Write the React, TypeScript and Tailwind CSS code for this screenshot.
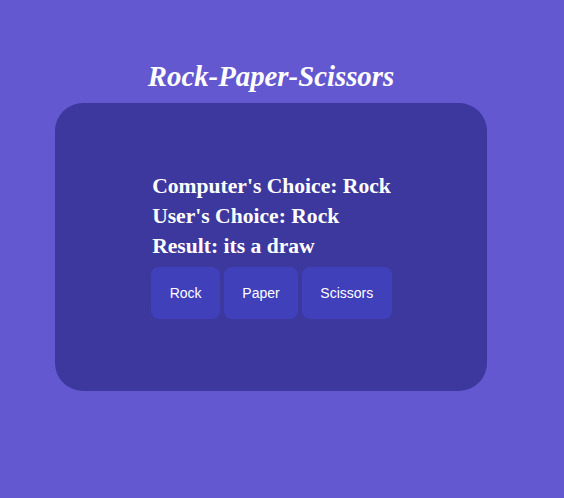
import React, { useState } from 'react';

type Choice = 'Rock' | 'Paper' | 'Scissors';

const choices: Choice[] = ['Rock', 'Paper', 'Scissors'];

const getResult = (user: Choice, computer: Choice) => {
  if (user === computer) return 'its a draw';
  if (
    (user === 'Rock' && computer === 'Scissors') ||
    (user === 'Paper' && computer === 'Rock') ||
    (user === 'Scissors' && computer === 'Paper')
  )
    return 'you win';
  return 'you lose';
};

export default function App() {
  const [user, setUser] = useState<Choice>('Rock');
  const [computer, setComputer] = useState<Choice>('Rock');

  const play = (c: Choice) => {
    setUser(c);
    setComputer(choices[Math.floor(Math.random() * 3)]);
  };

  return (
    <div className="min-h-[498px] w-full bg-[#6358cf] pt-[60px] [font-family:'Liberation_Serif',serif]">
      <div className="ml-[55px] w-[432px]">
        <h1 className="text-center text-[28.8px] font-bold italic leading-[33px] text-white">Rock-Paper-Scissors</h1>
        <div className="mt-[10px] flex h-[288px] items-center justify-center rounded-[28px] bg-[#3c389e]">
          <div className="flex flex-col items-start pb-[3px] pl-[1px]">
            <div className="pl-[1px] text-[21.6px] font-bold leading-[29.7px] text-white">
              <div>Computer's Choice: {computer}</div>
              <div>User's Choice: {user}</div>
              <div>Result: {getResult(user, computer)}</div>
            </div>
            <div className="mt-[5px] flex gap-[3.5px]">
              {choices.map((c) => (
                <button
                  key={c}
                  onClick={() => play(c)}
                  className="rounded-[8px] bg-[#4040bb] px-[18.6px] py-[18px] text-[14px] leading-4 text-white [font-family:'Liberation_Sans',Arial,sans-serif]"
                >
                  {c}
                </button>
              ))}
            </div>
          </div>
        </div>
      </div>
    </div>
  );
}
